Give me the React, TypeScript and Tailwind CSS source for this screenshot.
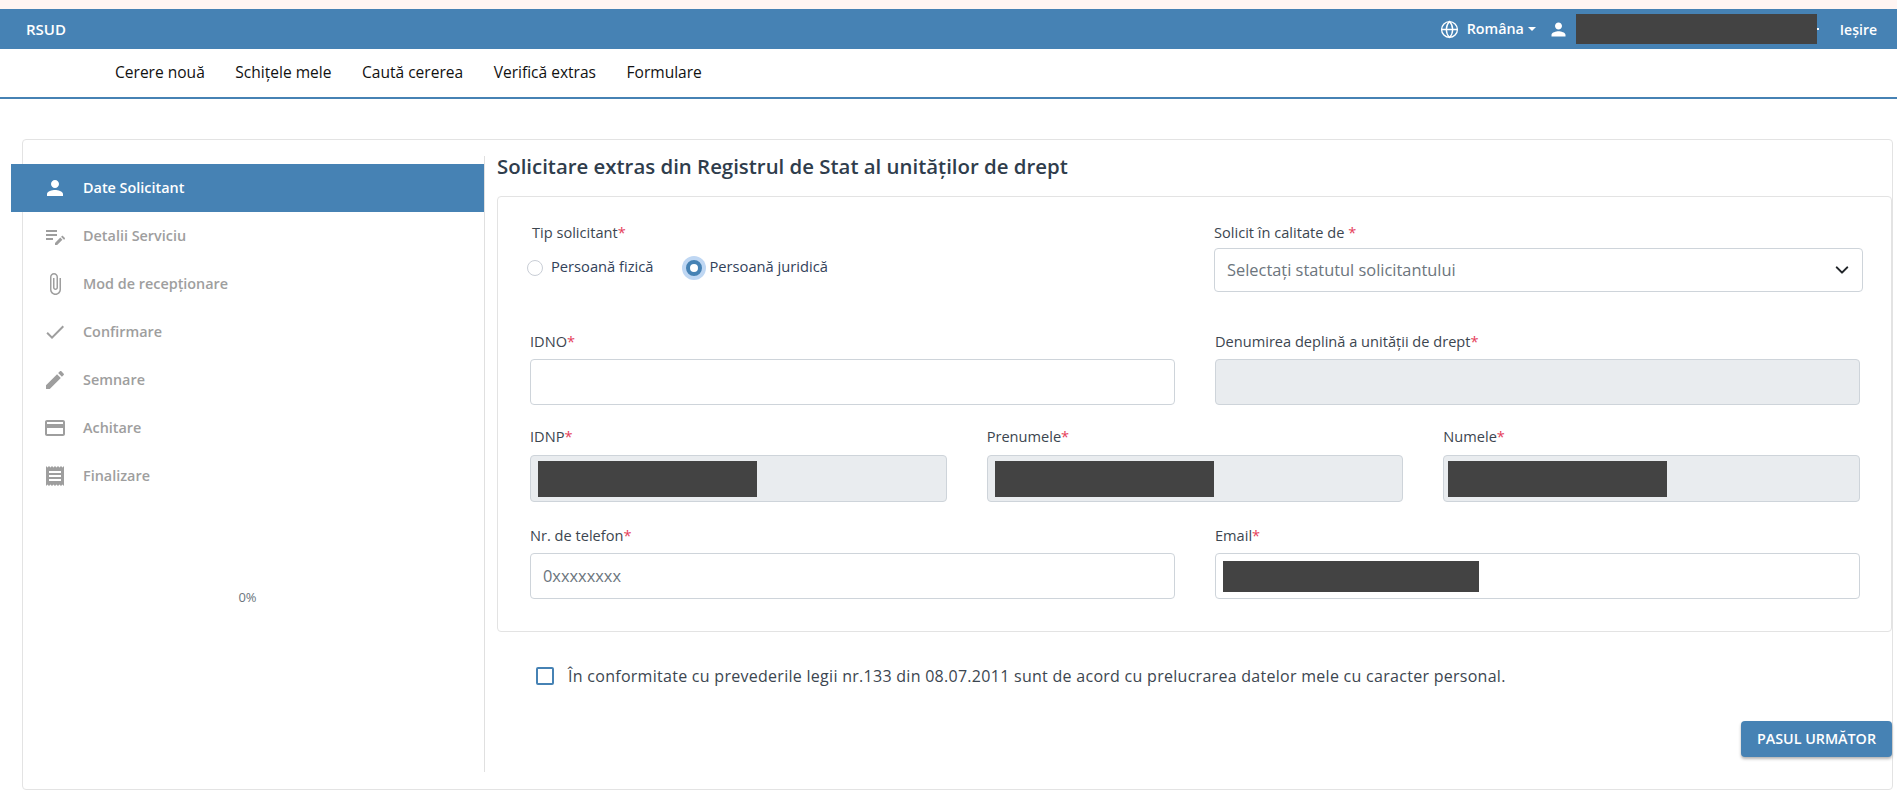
import { Globe } from "lucide-react";

const steps = [
  { label: "Date Solicitant", d: "M12 12c2.21 0 4-1.79 4-4s-1.79-4-4-4-4 1.79-4 4 1.79 4 4 4zm0 2c-2.67 0-8 1.34-8 4v2h16v-2c0-2.66-5.33-4-8-4z" },
  { label: "Detalii Serviciu", d: "M3 10h11v2H3v-2zm0-2h11V6H3v2zm0 8h7v-2H3v2zm15.01-3.13.71-.71c.39-.39 1.02-.39 1.41 0l1.59 1.59c.39.39.39 1.02 0 1.41l-.71.71-3-3zm-.71.71-5.3 5.3V21h2.12l5.3-5.3-2.12-2.12z" },
  { label: "Mod de recepționare", d: "M16.5 6v11.5c0 2.21-1.79 4-4 4s-4-1.79-4-4V5c0-1.38 1.12-2.5 2.5-2.5s2.5 1.12 2.5 2.5v10.5c0 .55-.45 1-1 1s-1-.45-1-1V6H10v9.5c0 1.38 1.12 2.5 2.5 2.5s2.5-1.12 2.5-2.5V5c0-2.21-1.79-4-4-4S7 2.79 7 5v12.5c0 3.04 2.46 5.5 5.5 5.5s5.5-2.46 5.5-5.5V6h-1.5z" },
  { label: "Confirmare", d: "M9 16.17L4.83 12l-1.42 1.41L9 19 21 7l-1.41-1.41z" },
  { label: "Semnare", d: "M3 17.25V21h3.75L17.81 9.94l-3.75-3.75L3 17.25zM20.71 7.04c.39-.39.39-1.02 0-1.41l-2.34-2.34c-.39-.39-1.02-.39-1.41 0l-1.83 1.83 3.75 3.75 1.83-1.83z" },
  { label: "Achitare", d: "M20 4H4c-1.11 0-1.99.89-1.99 2L2 18c0 1.11.89 2 2 2h16c1.11 0 2-.89 2-2V6c0-1.11-.89-2-2-2zm0 14H4v-6h16v6zm0-10H4V6h16v2z" },
  { label: "Finalizare", d: "M18 17H6v-2h12v2zm0-4H6v-2h12v2zm0-4H6V7h12v2zM3 22l1.5-1.5L6 22l1.5-1.5L9 22l1.5-1.5L12 22l1.5-1.5L15 22l1.5-1.5L18 22l1.5-1.5L21 22V2l-1.5 1.5L18 2l-1.5 1.5L15 2l-1.5 1.5L12 2l-1.5 1.5L9 2 7.5 3.5 6 2 4.5 3.5 3 2v20z" },
];

const personPath = steps[0].d;

function Icon({ d, className }: { d: string; className: string }) {
  return (
    <svg viewBox="0 0 24 24" fill="currentColor" className={className}>
      <path d={d} />
    </svg>
  );
}

function Label({ text }: { text: string }) {
  return (
    <div className="h-[24px] text-[14.6px] leading-[23px] text-[#3c4650]">
      {text}
      <span className="text-[#e53e5a]">*</span>
    </div>
  );
}

function Field({ label, value, disabled, tall, mask }: { label: string; value?: string; disabled?: boolean; tall?: boolean; mask?: string }) {
  return (
    <div>
      <Label text={label} />
      <div
        className={`flex items-center rounded-[4px] border border-[#ced4da] pl-[7px] text-[16.4px] text-[#6c757d] ${
          tall ? "mt-[6px] h-[47px]" : "mt-[5px] h-[46px]"
        } ${disabled ? "bg-[#e9ecef]" : "bg-white"}`}
      >
        {mask && <div className={`bg-[#434343] ${mask}`} />}
        {value && <span className="pl-[5px]">{value}</span>}
      </div>
    </div>
  );
}

export default function App() {
  return (
    <div className="h-[793px] overflow-hidden bg-white font-['Open_Sans',sans-serif]">
      <div className="h-[9px] bg-[#fff5f2]" />

      <header className="flex h-[40px] items-center bg-[#4682b4] pl-[26px] pr-[20px] text-white">
        <span className="text-[15px] font-semibold">RSUD</span>
        <div className="ml-auto flex items-center">
          <Globe size={19} strokeWidth={1.7} />
          <span className="ml-[8px] text-[14.3px] font-semibold">Româna</span>
          <span className="ml-[4px] h-0 w-0 border-x-[4px] border-t-[4px] border-x-transparent border-t-white" />
          <Icon d={personPath} className="ml-[12px] h-[21px] w-[21px]" />
          <div className="ml-[7px] h-[30px] w-[241px] bg-[#434343]" />
          <span className="h-[2px] w-[2px] bg-white" />
          <span className="ml-[21px] text-[14px] font-semibold">Ieșire</span>
        </div>
      </header>

      <nav className="flex h-[50px] items-center gap-[30.5px] border-b-2 border-[#4682b4] pb-[1px] pl-[115px] text-[15.55px] font-medium text-[#111]">
        <span>Cerere nouă</span>
        <span>Schițele mele</span>
        <span>Caută cererea</span>
        <span>Verifică extras</span>
        <span>Formulare</span>
      </nav>

      <main className="ml-[22px] mr-[4px] mt-[40px] flex h-[651px] rounded-[4px] border border-[#e3e3e3]">
        <aside className="mt-[16px] h-[616px] w-[462px] shrink-0 border-r border-[#e0e0e0] pt-[8px]">
          {steps.map((step, i) => (
            <div
              key={step.label}
              className={`flex h-[48px] items-center gap-[16px] text-[14.4px] font-semibold ${
                i === 0 ? "-ml-[12px] bg-[#4682b4] pl-[32px] text-white" : "pl-[20px] text-[#9e9e9e]"
              }`}
            >
              <Icon d={step.d} className="h-[24px] w-[24px] shrink-0" />
              <span className="mb-[1px]">{step.label}</span>
            </div>
          ))}
          <div className="mt-[88px] pr-[12px] text-center text-[13px] text-[#6c757d]">0%</div>
        </aside>

        <section className="min-w-0 flex-1 pl-[12px]">
          <h1 className="mt-[12px] h-[28px] text-[20.4px] font-semibold leading-[28px] text-[#2f3d4c]">
            Solicitare extras din Registrul de Stat al unităților de drept
          </h1>
          <div className="mt-[16px] h-[436px] rounded-[4px] border border-[#e3e3e3] pl-[32px] pt-[24px]">
            <div className="grid w-[1330px] grid-cols-2 gap-x-[40px]">
              <div className="pl-[2px]">
                <Label text="Tip solicitant" />
                <div className="mt-[11px] flex h-[24px] items-center text-[14.7px] text-[#32425a]">
                  <span className="-ml-[5px] h-[16px] w-[16px] rounded-full border border-[#c9ced6] bg-white" />
                  <span className="mb-[4px] ml-[8px]">Persoană fizică</span>
                  <span className="ml-[32px] h-[16px] w-[16px] rounded-full border-[4px] border-[#4682b4] bg-white shadow-[0_0_0_4px_#bfd7f3]" />
                  <span className="mb-[4px] ml-[8px]">Persoană juridică</span>
                </div>
              </div>
              <div className="-ml-[1px] w-[649px]">
                <div className="h-[24px] text-[14.6px] leading-[23px] text-[#3c4650]">
                  Solicit în calitate de <span className="text-[#e53e5a]">*</span>
                </div>
                <div className="mt-[3px] flex h-[44px] items-center justify-between rounded-[4px] border border-[#ced4da] bg-white pl-[12px] pr-[13px] text-[16.4px] text-[#6c757d]">
                  <span>Selectați statutul solicitantului</span>
                  <svg viewBox="0 0 16 16" fill="none" stroke="#212529" strokeWidth="2.4" strokeLinecap="round" strokeLinejoin="round" className="h-[14px] w-[14px]">
                    <path d="m2 5 6 6 6-6" />
                  </svg>
                </div>
              </div>
            </div>

            <div className="mt-[38px] grid w-[1330px] grid-cols-2 gap-x-[40px]">
              <Field label="IDNO" />
              <Field label="Denumirea deplină a unității de drept" disabled />
            </div>

            <div className="mt-[20px] grid w-[1330px] grid-cols-3 gap-x-[40px]">
              <Field label="IDNP" disabled tall mask="h-[36px] w-[219px]" />
              <Field label="Prenumele" disabled tall mask="h-[36px] w-[219px]" />
              <Field label="Numele" disabled tall mask="-ml-[3px] h-[36px] w-[219px]" />
            </div>

            <div className="mt-[22px] grid w-[1330px] grid-cols-2 gap-x-[40px]">
              <Field label="Nr. de telefon" value="0xxxxxxxx" />
              <Field label="Email" mask="h-[31px] w-[256px]" />
            </div>
          </div>

          <div className="ml-[39px] mt-[32px] flex h-[24px] items-center gap-[14px] text-[16px] tracking-[0.28px] text-[#3c4650]">
            <span className="h-[18px] w-[18px] shrink-0 rounded-[2px] border-2 border-[#4682b4]" />
            <span>În conformitate cu prevederile legii nr.133 din 08.07.2011 sunt de acord cu prelucrarea datelor mele cu caracter personal.</span>
          </div>

          <div className="mt-[33px] flex justify-end">
            <button className="h-[36px] w-[151px] rounded-[4px] bg-[#4682b4] text-[14.3px] font-semibold uppercase text-white shadow-[0_2px_3px_rgba(0,0,0,0.3)]">
              Pasul următor
            </button>
          </div>
        </section>
      </main>
    </div>
  );
}
